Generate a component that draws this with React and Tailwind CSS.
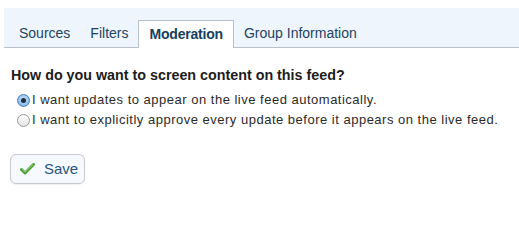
import React from "react";

function Radio({ checked }) {
  return (
    <span
      className={
        "inline-flex items-center justify-center w-[13px] h-[13px] rounded-full border shrink-0 " +
        (checked
          ? "border-[#4a7fb8] bg-[radial-gradient(circle_at_50%_40%,#cfe6fb,#6aa6de)]"
          : "border-[#9a9a9a] bg-[linear-gradient(#fdfdfd,#e4e4e4)]")
      }
    >
      {checked && <span className="w-[5px] h-[5px] rounded-full bg-[#1d2f45]" />}
    </span>
  );
}

export default function App() {
  const tabs = ["Sources", "Filters", "Moderation", "Group Information"];
  return (
    <div className="w-[519px] h-[207px] bg-white pt-[8px] font-['Liberation_Sans',Arial,sans-serif]">
      <div className="ml-[4px] h-[40px] bg-[#eff5fd] border-b border-[#b9c0cb] flex items-end pl-[5px]">
        {tabs.map((t) =>
          t === "Moderation" ? (
            <div
              key={t}
              className="h-[28px] -mb-px px-[10px] flex items-center bg-white border border-b-0 border-[#b9c0cb] text-[14px] font-bold text-[#15405f] tracking-[-0.2px]"
            >
              {t}
            </div>
          ) : (
            <div key={t} className="h-[28px] px-[10px] flex items-center text-[14px] text-[#1d4363]">
              {t}
            </div>
          )
        )}
      </div>
      <div className="px-[11px] pt-[17px]">
        <div className="text-[14.3px] font-bold text-[#1c1c1c] leading-[20px] whitespace-nowrap">
          How do you want to screen content on this feed?
        </div>
        <div className="mt-[5px] flex flex-col text-[13px] tracking-[0.5px] text-[#2b2b2b] whitespace-nowrap">
          <label className="flex items-center gap-[2px] h-[20px] pl-[6px]">
            <Radio checked />
            <span>I want updates to appear on the live feed automatically.</span>
          </label>
          <label className="flex items-center gap-[2px] h-[20px] pl-[6px]">
            <Radio />
            <span>I want to explicitly approve every update before it appears on the live feed.</span>
          </label>
        </div>
        <button className="mt-[24px] ml-[-1px] w-[75px] h-[30px] rounded-[6px] border border-[#c6c9ce] bg-[#f6f9fd] flex items-center pl-[9px] gap-[9px] shadow-[0_1px_1px_rgba(0,0,0,0.06)]">
          <svg width="15" height="12" viewBox="0 0 15 12">
            <path d="M1.5 6.5 L5 10 L13.5 1.5" fill="none" stroke="#4c9f3a" strokeWidth="3" strokeLinecap="round" strokeLinejoin="round" />
            <path d="M2 6.2 L5 9.1 L13 1.6" fill="none" stroke="#8fd277" strokeWidth="1" strokeLinecap="round" strokeLinejoin="round" />
          </svg>
          <span className="text-[15px] text-[#2a5580]">Save</span>
        </button>
      </div>
    </div>
  );
}
